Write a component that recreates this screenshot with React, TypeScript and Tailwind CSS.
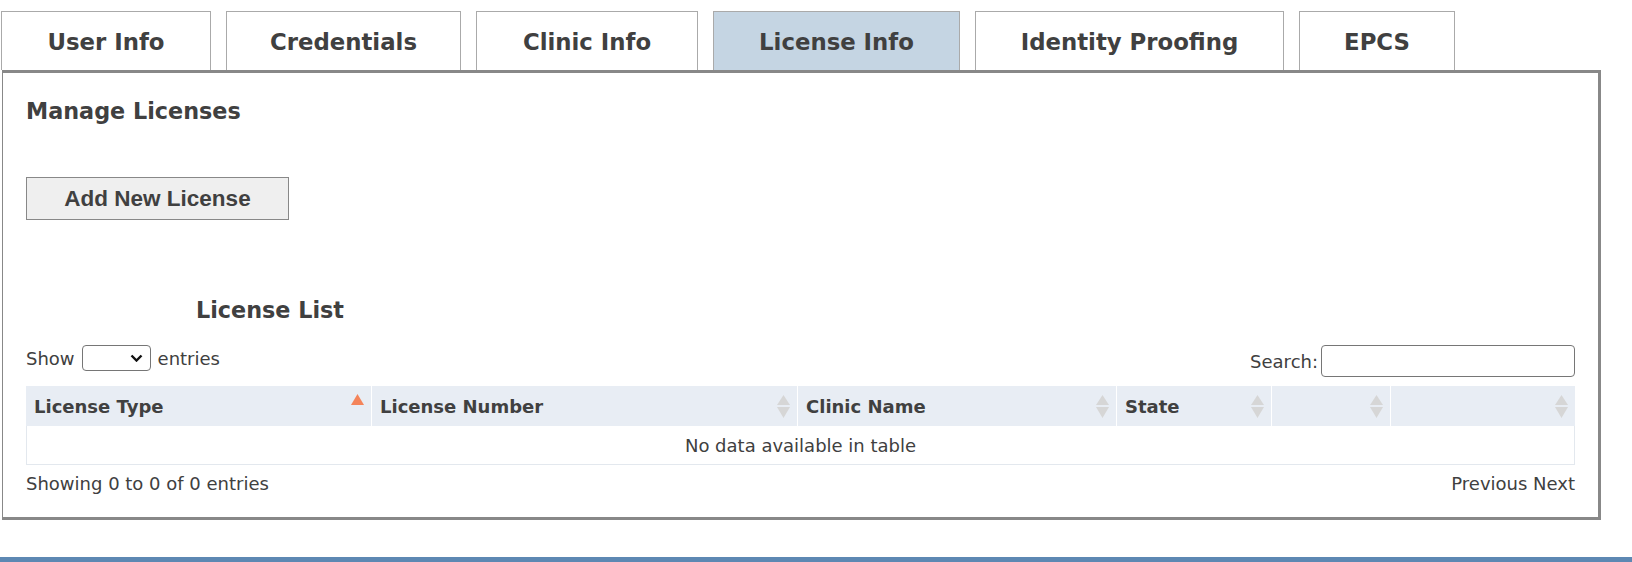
import React from 'react';

const tabs = [
  { label: 'User Info', width: 'w-[210px]', active: false },
  { label: 'Credentials', width: 'w-[235px]', active: false },
  { label: 'Clinic Info', width: 'w-[222px]', active: false },
  { label: 'License Info', width: 'w-[247px]', active: true },
  { label: 'Identity Proofing', width: 'w-[309px]', active: false },
  { label: 'EPCS', width: 'w-[156px]', active: false },
];

const columns = [
  { title: 'License Type', width: 'w-[346px]', sorted: true },
  { title: 'License Number', width: 'w-[426px]', sorted: false },
  { title: 'Clinic Name', width: 'w-[319px]', sorted: false },
  { title: 'State', width: 'w-[155px]', sorted: false },
  { title: '', width: 'w-[119px]', sorted: false },
  { title: '', width: 'w-[184px]', sorted: false },
];

function SortIcon({ sorted }: { sorted: boolean }) {
  if (sorted) {
    return (
      <svg width="13" height="25" viewBox="0 0 13 25" className="shrink-0">
        <polygon points="6.5,0 13,11 0,11" fill="#f4845a" />
      </svg>
    );
  }
  return (
    <svg width="13" height="25" viewBox="0 0 13 25" className="shrink-0">
      <polygon points="6.5,1 13,11 0,11" fill="#d6d6d6" />
      <polygon points="0,13 13,13 6.5,24" fill="#d6d6d6" />
    </svg>
  );
}

export default function App() {
  return (
    <div className="w-[1632px] h-[562px] bg-white overflow-hidden text-[#404040] font-['DejaVu_Sans',sans-serif]">
      {/* tabs */}
      <div className="flex gap-[15px] pt-[11px] pl-[1px]">
        {tabs.map((t) => (
          <div
            key={t.label}
            className={`${t.width} h-[59px] pt-[2px] flex items-center justify-center border border-b-0 border-[#aaaaaa] text-[22.8px] font-bold ${
              t.active ? 'bg-[#c5d5e3]' : 'bg-white'
            }`}
          >
            {t.label}
          </div>
        ))}
      </div>

      {/* panel */}
      <div className="ml-[2px] w-[1599px] h-[450px] border-l border-t-[3px] border-r-[3px] border-b-[3px] border-[#888888] px-[23px] pt-[24px]">
        <h2 className="text-[22.3px] leading-[28px] font-bold">Manage Licenses</h2>

        <button className="mt-[52px] w-[263px] h-[43px] border border-[#888888] bg-[#efefef] text-[22.5px] font-bold font-['Liberation_Sans',sans-serif] text-[#404040]">
          Add New License
        </button>

        <h3 className="mt-[76px] ml-[170px] text-[22.3px] leading-[28px] font-bold">License List</h3>

        <div className="mt-[21px] flex justify-between items-start text-[18px]">
          <div className="flex items-center h-[26px] gap-[7px]">
            <span>Show</span>
            <div className="w-[69px] h-[26px] rounded-[4px] border border-[#767676] bg-white flex items-center justify-end pr-[7px]">
              <svg width="13" height="8" viewBox="0 0 13 8">
                <polyline points="1.5,1.5 6.5,6.5 11.5,1.5" fill="none" stroke="#111" strokeWidth="2.4" />
              </svg>
            </div>
            <span>entries</span>
          </div>
          <div className="flex items-center h-[32px] gap-[3px]">
            <span>Search:</span>
            <div className="w-[254px] h-[32px] rounded-[4px] border border-[#767676] bg-white" />
          </div>
        </div>

        {/* table */}
        <div className="mt-[9px] w-[1549px]">
          <div className="flex h-[40px] bg-[#e8edf4]">
            {columns.map((c, i) => (
              <div
                key={i}
                className={`${c.width} flex items-center justify-between pl-[8px] pr-[7px] text-[18px] font-bold ${
                  i < columns.length - 1 ? 'border-r border-white' : ''
                }`}
              >
                <span>{c.title}</span>
                <SortIcon sorted={c.sorted} />
              </div>
            ))}
          </div>
          <div className="h-[39px] flex items-center justify-center border-x border-b border-[#e3e8ee] text-[18px]">
            No data available in table
          </div>
        </div>

        <div className="mt-[8px] flex justify-between text-[18px] leading-[22px]">
          <span>Showing 0 to 0 of 0 entries</span>
          <span>Previous Next</span>
        </div>
      </div>

      <div className="mt-[37px] h-[5px] w-full bg-[#5d88b3]" />
    </div>
  );
}
